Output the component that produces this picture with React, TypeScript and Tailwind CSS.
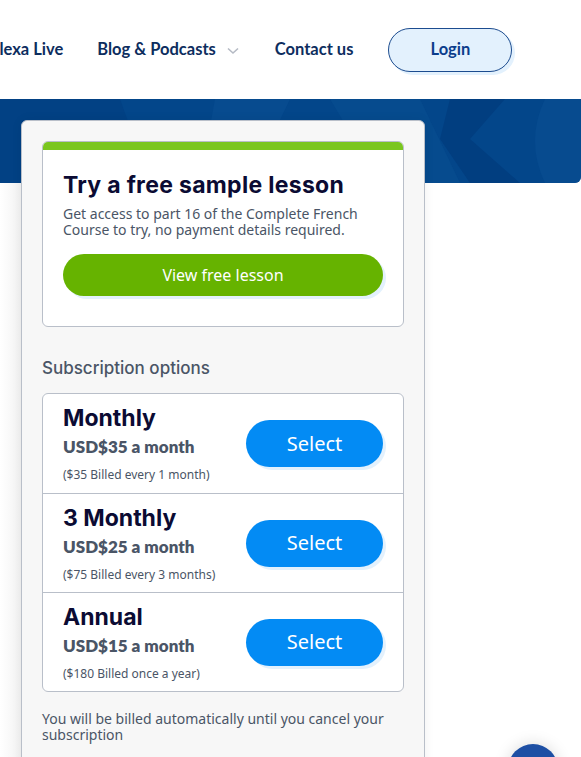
import React from 'react';

const plans = [
  { name: 'Monthly', price: 'USD$35 a month', note: '($35 Billed every 1 month)' },
  { name: '3 Monthly', price: 'USD$25 a month', note: '($75 Billed every 3 months)' },
  { name: 'Annual', price: 'USD$15 a month', note: '($180 Billed once a year)' },
];

const headingFont = "font-['Inter',sans-serif]";
const navFont = "font-['Lato',sans-serif]";
const bodyFont = "font-['Noto_Sans',sans-serif]";

const App: React.FC = () => {
  return (
    <div className="relative h-[757px] w-[581px] overflow-hidden bg-white">
      {/* top nav */}
      <div className={`flex h-[99px] items-center ${navFont} text-[16.5px] font-bold text-[#0d2d5e]`}>
        <span className="-ml-[12px] whitespace-nowrap">Alexa Live</span>
        <span className="ml-[34px] flex items-center gap-[11px] whitespace-nowrap">
          Blog &amp; Podcasts
          <svg width="12" height="8" viewBox="0 0 12 8" className="mt-[2px]">
            <path d="M1 1.5l5 4.5 5-4.5" fill="none" stroke="#b5bac4" strokeWidth="1.6" />
          </svg>
        </span>
        <span className="ml-[36px] whitespace-nowrap">Contact us</span>
        <button className="ml-[35px] h-[44px] w-[124px] rounded-full border border-[#1c4c8f] bg-[#e3f1fd] text-[#0b3d8c] shadow-[3px_3px_0_#e3f1fd]">
          Login
        </button>
      </div>

      {/* blue banner */}
      <div className="relative h-[84px] w-[581px] overflow-hidden rounded-br-[6px] bg-[#03468a]">
        <svg width="581" height="84" viewBox="0 0 581 84" className="absolute inset-0">
          <polygon points="0,0 120,0 150,84 0,84" fill="#023d80" opacity="0.6" />
          <polygon points="215,0 290,0 250,84 200,84" fill="#0a4f92" opacity="0.6" />
          <polygon points="330,0 420,0 460,84 380,84" fill="#0a4f92" opacity="0.5" />
          <polygon points="450,0 505,0 470,40 520,84 470,84 440,40" fill="#023a7c" opacity="0.7" />
          <path d="M545 0 Q525 42 545 84 L581 84 L581 0 Z" fill="#0a4f92" opacity="0.6" />
        </svg>
      </div>

      {/* fade at left edge */}
      <div className="pointer-events-none absolute left-0 top-[183px] h-[574px] w-[21px] bg-gradient-to-r from-white to-[#f2f2f2]" />

      {/* side panel */}
      <div className="relative -mt-[63px] ml-[21px] w-[404px] rounded-t-[6px] border border-[#b9bfc9] bg-[#f7f7f7] px-[20px] pb-[40px] pt-[20px] shadow-[0_0_12px_rgba(0,0,0,0.06)]">
        {/* free lesson card */}
        <div className="overflow-hidden rounded-[6px] border border-[#b9bfc9] bg-white">
          <div className="h-[8px] bg-[#7ac61f]" />
          <div className="px-[20px] pb-[30px] pt-[21px]">
            <h2 className={`${headingFont} text-[23px] font-bold leading-[28px] tracking-[0.3px] text-[#0b0b33]`}>
              Try a free sample lesson
            </h2>
            <p className={`${bodyFont} mt-[7px] text-[14px] leading-[16px] text-[#4a5566]`}>
              Get access to part 16 of the Complete French Course to try, no payment details required.
            </p>
            <button className={`${bodyFont} mt-[16px] h-[42px] w-full rounded-full bg-[#66b300] text-[16px] text-white shadow-[3px_3px_0_#e3f1fd]`}>
              View free lesson
            </button>
          </div>
        </div>

        <h3 className={`${headingFont} mt-[29px] text-[17px] font-medium leading-[24px] text-[#4a5566]`}>
          Subscription options
        </h3>

        {/* plans */}
        <div className="mt-[13px] overflow-hidden rounded-[6px] border border-[#b9bfc9] bg-white">
          {plans.map((p, i) => (
            <div
              key={p.name}
              className={`flex h-[99px] items-center justify-between px-[20px] ${i > 0 ? 'border-t border-[#b9bfc9]' : ''}`}
            >
              <div>
                <div className={`${headingFont} text-[23px] font-bold leading-[28px] text-[#0b0b33]`}>{p.name}</div>
                <div className={`${navFont} mt-[4px] text-[17px] font-extrabold leading-[22px] text-[#4a5566]`}>{p.price}</div>
                <div className={`${bodyFont} mt-[9px] text-[12px] leading-[16px] text-[#4a5566]`}>{p.note}</div>
              </div>
              <button className={`${bodyFont} h-[47px] w-[137px] rounded-full bg-[#038bf4] text-[20px] text-white shadow-[3px_3px_0_#e3f1fd]`}>
                Select
              </button>
            </div>
          ))}
        </div>

        <p className={`${bodyFont} mt-[19px] text-[14px] leading-[16px] text-[#4a5566]`}>
          You will be billed automatically until you cancel your subscription
        </p>
      </div>

      {/* chat widget bubble */}
      <div className="absolute left-[508px] top-[744px] h-[50px] w-[50px] rounded-full bg-[#1d4fa4] shadow-[0_0_16px_rgba(0,0,0,0.15)]" />
    </div>
  );
};

export default App;
